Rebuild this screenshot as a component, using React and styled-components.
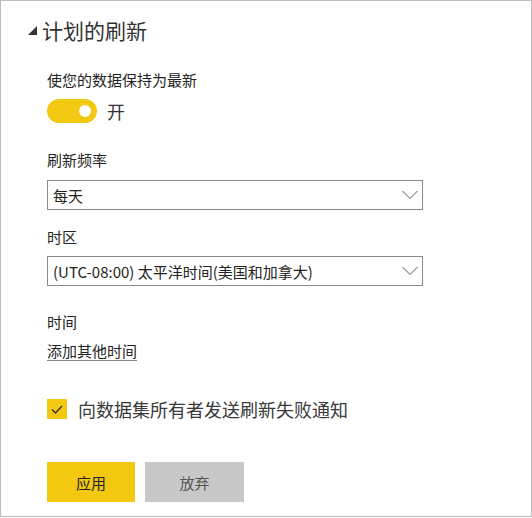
import React from "react";
import styled, { createGlobalStyle } from "styled-components";

const Global = createGlobalStyle`
  html, body { margin: 0; padding: 0; background: #fff; }
  body { font-family: "Noto Sans CJK SC", "Noto Sans", sans-serif; }
`;

const Frame = styled.div`
  box-sizing: border-box;
  width: 532px;
  height: 517px;
  border: 1px solid #bdbdbd;
  background: #fff;
  display: flex;
  flex-direction: column;
`;

const Heading = styled.h2`
  margin: 15px 0 0 27px;
  display: flex;
  align-items: center;
  gap: 5px;
  font-size: 21px;
  line-height: 28px;
  font-weight: 400;
  color: #333;
`;

const Body = styled.div`
  display: flex;
  flex-direction: column;
  padding-left: 46px;
`;

const Label = styled.div`
  margin-top: ${(p) => p.$top}px;
  font-size: 15px;
  line-height: 20px;
  color: #252525;
`;

const ToggleRow = styled.div`
  margin-top: 9px;
  display: flex;
  align-items: center;
  gap: 10px;
  font-size: 18px;
  line-height: 24px;
  color: #333;
`;

const Track = styled.div`
  width: 50px;
  height: 24px;
  border-radius: 12px;
  background: #f2c811;
  display: flex;
  align-items: center;
  justify-content: flex-end;
  padding-right: 6px;
  box-sizing: border-box;
`;

const Knob = styled.div`
  width: 12px;
  height: 12px;
  border-radius: 50%;
  background: #fff;
`;

const Select = styled.div`
  margin-top: ${(p) => p.$top}px;
  box-sizing: border-box;
  width: 376px;
  height: 30px;
  border: 1px solid #8a8a8a;
  display: flex;
  align-items: center;
  justify-content: space-between;
  padding: 0 4px 0 5px;
  font-size: 15px;
  color: #222;
`;

const Link = styled.a`
  margin-top: 9px;
  align-self: flex-start;
  font-size: 15px;
  line-height: 20px;
  color: #252525;
  text-decoration: underline;
  text-decoration-color: #888;
  text-underline-offset: 3px;
`;

const CheckRow = styled.div`
  margin-top: 37px;
  display: flex;
  align-items: center;
  gap: 11px;
  font-size: 18px;
  line-height: 22px;
  color: #3a3a3a;
`;

const Box = styled.div`
  width: 20px;
  height: 20px;
  background: #f2c811;
  display: flex;
  align-items: center;
  justify-content: center;
`;

const Buttons = styled.div`
  margin-top: 42px;
  display: flex;
  gap: 10px;
`;

const Button = styled.button`
  width: ${(p) => p.$w}px;
  height: 40px;
  border: none;
  padding: 0;
  background: ${(p) => (p.$primary ? "#f2c811" : "#c8c8c8")};
  color: ${(p) => (p.$primary ? "#222" : "#555")};
  font-family: "Noto Sans CJK SC", "Noto Sans", sans-serif;
  font-size: 15px;
`;

const Chevron = () => (
  <svg width="16" height="10" viewBox="0 0 16 10">
    <polyline points="0.5,1 8,8.5 15.5,1" fill="none" stroke="#555" strokeWidth="1" />
  </svg>
);

export default function App() {
  return (
    <>
      <Global />
      <Frame>
        <Heading>
          <svg width="9" height="9" viewBox="0 0 9 9">
            <polygon points="9,0 9,9 0,9" fill="#333" />
          </svg>
          计划的刷新
        </Heading>
        <Body>
          <Label $top={26}>使您的数据保持为最新</Label>
          <ToggleRow>
            <Track>
              <Knob />
            </Track>
            开
          </ToggleRow>
          <Label $top={27}>刷新频率</Label>
          <Select $top={10}>
            <span>每天</span>
            <Chevron />
          </Select>
          <Label $top={17}>时区</Label>
          <Select $top={9}>
            <span>(UTC-08:00) 太平洋时间(美国和加拿大)</span>
            <Chevron />
          </Select>
          <Label $top={26}>时间</Label>
          <Link>添加其他时间</Link>
          <CheckRow>
            <Box>
              <svg width="12" height="9" viewBox="0 0 12 9">
                <polyline points="1,4.5 4.5,8 11,1" fill="none" stroke="#333" strokeWidth="1.3" />
              </svg>
            </Box>
            向数据集所有者发送刷新失败通知
          </CheckRow>
          <Buttons>
            <Button $primary $w={88}>应用</Button>
            <Button $w={99}>放弃</Button>
          </Buttons>
        </Body>
      </Frame>
    </>
  );
}
